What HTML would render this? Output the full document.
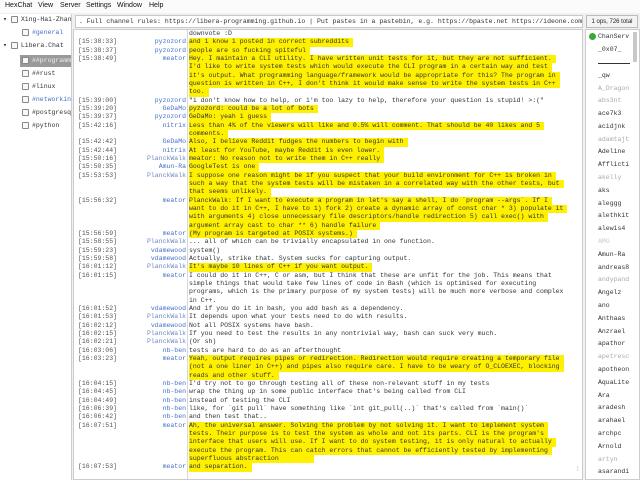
<!DOCTYPE html>
<html><head><meta charset="utf-8"><style>
*{margin:0;padding:0;box-sizing:border-box}
body{width:640px;height:480px;overflow:hidden;background:#f0f0f0;font-family:"Liberation Sans",sans-serif;position:relative}
.menu{position:absolute;left:0;top:0;width:640px;height:13px;background:#fbfbfb;font-size:7px;color:#111}
.menu span{position:absolute;top:2px}
.tree{position:absolute;left:0;top:14px;width:72px;height:466px;background:#fff;border-right:1px solid #ccc;font-family:"Liberation Mono",monospace;font-size:6.5px;color:#333;overflow:hidden}
.ti{position:absolute;white-space:nowrap;height:12px;line-height:12px}
.ic{display:inline-block;width:7px;height:7px;border:1px solid #888;border-radius:1px;vertical-align:middle;margin-right:3px;background:#f8f8f8}
.topic{position:absolute;left:75px;top:15px;width:508px;height:13px;background:#fff;border:1px solid #c8c8c8;font-family:"Liberation Mono",monospace;font-size:6.5px;line-height:12px;color:#333;white-space:nowrap;overflow:hidden;padding-left:3px}
.ops{position:absolute;left:586px;top:15px;width:52px;height:13px;border:1px solid #bbb;font-size:6px;line-height:12px;text-align:center;background:#f4f4f4;color:#222}
.chat{position:absolute;left:73px;top:29px;width:510px;height:451px;background:#fff;border:1px solid #ccc;overflow:hidden;font-family:"Liberation Mono",monospace;font-size:6.5px;color:#333}
.sep{position:absolute;left:113px;top:0;width:1px;height:451px;background:#d8d8d8}
.l{position:absolute;left:0;height:8.33px;line-height:8.33px;white-space:nowrap;width:500px}
.t{position:absolute;left:4px;color:#555}
.n{position:absolute;right:388px;color:#4470c8}
.n.p{color:#7088c0}
.m{position:absolute;left:115px}
.y{background:#fff000;padding-right:4px}
.users{position:absolute;left:585px;top:29px;width:55px;height:451px;background:#fff;border:1px solid #ccc;font-family:"Liberation Mono",monospace;font-size:6.5px;color:#333;overflow:hidden}
.u{position:absolute;left:12px;white-space:nowrap}
.g{color:#aaa}
</style></head><body>
<div class="menu"><span style="left:5px">HexChat</span><span style="left:38px">View</span><span style="left:60px">Server</span><span style="left:86px">Settings</span><span style="left:117px">Window</span><span style="left:149px">Help</span></div>
<div class="tree">
<div class="ti" style="left:3px;top:0">▾ <span class="ic"></span>Xing-Hai-Zhan</div>
<div class="ti" style="left:22px;top:13px"><span class="ic"></span><span style="color:#4470c8">#general</span></div>
<div class="ti" style="left:3px;top:26px">▾ <span class="ic"></span>Libera.Chat</div>
<div class="ti" style="left:20px;top:41px;width:52px;background:#9a9a9a;color:#eee;padding-left:2px"><span class="ic"></span>##programming</div>
<div class="ti" style="left:22px;top:54px"><span class="ic"></span>##rust</div>
<div class="ti" style="left:22px;top:67px"><span class="ic"></span>#linux</div>
<div class="ti" style="left:22px;top:80px"><span class="ic"></span><span style="color:#4470c8">#networking</span></div>
<div class="ti" style="left:22px;top:93px"><span class="ic"></span>#postgresql</div>
<div class="ti" style="left:22px;top:106px"><span class="ic"></span>#python</div>
</div>
<div class="topic">. Full channel rules: https://libera-programming.github.io | Put pastes in a pastebin, e.g. https://bpaste.net https://ideone.com</div>
<div class="ops">1 ops, 726 total</div>
<div class="chat"><div class="sep"></div>
<div class="l" style="top:0px"><span class="m">downvote :D</span></div>
<div class="l" style="top:8.33px"><span class="t">[15:38:33]</span><span class="n">pyzozord</span><span class="m y">and i know i posted in correct subreddits </span></div>
<div class="l" style="top:16.66px"><span class="t">[15:38:37]</span><span class="n">pyzozord</span><span class="m y">people are so fucking spiteful</span></div>
<div class="l" style="top:25px"><span class="t">[15:38:49]</span><span class="n">meator</span><span class="m y">Hey. I maintain a CLI utility. I have written unit tests for it, but they are not sufficient.</span></div>
<div class="l" style="top:33.3px"><span class="m y">I'd like to write system tests which would execute the CLI program in a certain way and test</span></div>
<div class="l" style="top:41.6px"><span class="m y">it's output. What programming language/framework would be appropriate for this? The program in</span></div>
<div class="l" style="top:50px"><span class="m y">question is written in C++, I don't think it would make sense to write the system tests in C++</span></div>
<div class="l" style="top:58.3px"><span class="m y">too.</span></div>
<div class="l" style="top:66.6px"><span class="t">[15:39:00]</span><span class="n">pyzozord</span><span class="m">"i don't know how to help, or i'm too lazy to help, therefore your question is stupid! &gt;:("</span></div>
<div class="l" style="top:75px"><span class="t">[15:39:20]</span><span class="n">GeDaMo</span><span class="m y">pyzozord: could be a lot of bots</span></div>
<div class="l" style="top:83.3px"><span class="t">[15:39:37]</span><span class="n">pyzozord</span><span class="m y">GeDaMo: yeah i guess</span></div>
<div class="l" style="top:91.6px"><span class="t">[15:42:16]</span><span class="n">nitrix</span><span class="m y">Less than 4% of the viewers will like and 0.5% will comment. That should be 40 likes and 5</span></div>
<div class="l" style="top:100px"><span class="m y">comments.</span></div>
<div class="l" style="top:108.3px"><span class="t">[15:42:42]</span><span class="n">GeDaMo</span><span class="m y">Also, I believe Reddit fudges the numbers to begin with</span></div>
<div class="l" style="top:116.6px"><span class="t">[15:42:44]</span><span class="n">nitrix</span><span class="m y">At least for YouTube, maybe Reddit is even lower.</span></div>
<div class="l" style="top:125px"><span class="t">[15:50:16]</span><span class="n p">PlanckWalk</span><span class="m y">meator: No reason not to write them in C++ really</span></div>
<div class="l" style="top:133.3px"><span class="t">[15:50:35]</span><span class="n">Amun-Ra</span><span class="m y">GoogleTest is one</span></div>
<div class="l" style="top:141.6px"><span class="t">[15:53:53]</span><span class="n p">PlanckWalk</span><span class="m y">I suppose one reason might be if you suspect that your build environment for C++ is broken in</span></div>
<div class="l" style="top:150px"><span class="m y">such a way that the system tests will be mistaken in a correlated way with the other tests, but</span></div>
<div class="l" style="top:158.3px"><span class="m y">that seems unlikely.</span></div>
<div class="l" style="top:166.6px"><span class="t">[15:56:32]</span><span class="n">meator</span><span class="m y">PlanckWalk: If I want to execute a program in let's say a shell, I do `program --args`. If I</span></div>
<div class="l" style="top:175px"><span class="m y">want to do it in C++, I have to 1) fork 2) create a dynamic array of const char * 3) populate it</span></div>
<div class="l" style="top:183.3px"><span class="m y">with arguments 4) close unnecessary file descriptors/handle redirection 5) call exec() with</span></div>
<div class="l" style="top:191.6px"><span class="m y">argument array cast to char ** 6) handle failure </span></div>
<div class="l" style="top:200px"><span class="t">[15:56:59]</span><span class="n">meator</span><span class="m y">(My program is targeted at POSIX systems.)</span></div>
<div class="l" style="top:208.3px"><span class="t">[15:58:55]</span><span class="n p">PlanckWalk</span><span class="m">... all of which can be trivially encapsulated in one function.</span></div>
<div class="l" style="top:216.6px"><span class="t">[15:59:23]</span><span class="n">vdamewood</span><span class="m">system()</span></div>
<div class="l" style="top:225px"><span class="t">[15:59:58]</span><span class="n">vdamewood</span><span class="m">Actually, strike that. System sucks for capturing output.</span></div>
<div class="l" style="top:233.3px"><span class="t">[16:01:12]</span><span class="n p">PlanckWalk</span><span class="m y">It's maybe 10 lines of C++ if you want output.</span></div>
<div class="l" style="top:241.6px"><span class="t">[16:01:15]</span><span class="n">meator</span><span class="m">I could do it in C++, C or asm, but I think that these are unfit for the job. This means that</span></div>
<div class="l" style="top:250px"><span class="m">simple things that would take few lines of code in Bash (which is optimised for executing</span></div>
<div class="l" style="top:258.3px"><span class="m">programs, which is the primary purpose of my system tests) will be much more verbose and complex</span></div>
<div class="l" style="top:266.6px"><span class="m">in C++.</span></div>
<div class="l" style="top:275px"><span class="t">[16:01:52]</span><span class="n">vdamewood</span><span class="m">And if you do it in bash, you add bash as a dependency.</span></div>
<div class="l" style="top:283.3px"><span class="t">[16:01:53]</span><span class="n p">PlanckWalk</span><span class="m">It depends upon what your tests need to do with results.</span></div>
<div class="l" style="top:291.6px"><span class="t">[16:02:12]</span><span class="n">vdamewood</span><span class="m">Not all POSIX systems have bash.</span></div>
<div class="l" style="top:300px"><span class="t">[16:02:15]</span><span class="n p">PlanckWalk</span><span class="m">If you need to test the results in any nontrivial way, bash can suck very much.</span></div>
<div class="l" style="top:308.3px"><span class="t">[16:02:21]</span><span class="n p">PlanckWalk</span><span class="m">(Or sh)</span></div>
<div class="l" style="top:316.6px"><span class="t">[16:03:06]</span><span class="n">nb-ben</span><span class="m">tests are hard to do as an afterthought</span></div>
<div class="l" style="top:325px"><span class="t">[16:03:23]</span><span class="n">meator</span><span class="m y">Yeah, output requires pipes or redirection. Redirection would require creating a temporary file</span></div>
<div class="l" style="top:333.3px"><span class="m y">(not a one liner in C++) and pipes also require care. I have to be weary of O_CLOEXEC, blocking</span></div>
<div class="l" style="top:341.6px"><span class="m y">reads and other stuff.</span></div>
<div class="l" style="top:350px"><span class="t">[16:04:15]</span><span class="n">nb-ben</span><span class="m">I'd try not to go through testing all of these non-relevant stuff in my tests</span></div>
<div class="l" style="top:358.3px"><span class="t">[16:04:45]</span><span class="n">nb-ben</span><span class="m">wrap the thing up in some public interface that's being called from CLI</span></div>
<div class="l" style="top:366.6px"><span class="t">[16:04:49]</span><span class="n">nb-ben</span><span class="m">instead of testing the CLI</span></div>
<div class="l" style="top:375px"><span class="t">[16:06:39]</span><span class="n">nb-ben</span><span class="m">like, for `git pull` have something like `int git_pull(..)` that's called from `main()`</span></div>
<div class="l" style="top:383.3px"><span class="t">[16:06:42]</span><span class="n">nb-ben</span><span class="m">and then test that..</span></div>
<div class="l" style="top:391.6px"><span class="t">[16:07:51]</span><span class="n">meator</span><span class="m y">Ah, the universal answer. Solving the problem by not solving it. I want to implement system</span></div>
<div class="l" style="top:400px"><span class="m y">tests. Their purpose is to test the system as whole and not its parts. CLI is the program's</span></div>
<div class="l" style="top:408.3px"><span class="m y">interface that users will use. If I want to do system testing, it is only natural to actually</span></div>
<div class="l" style="top:416.6px"><span class="m y">execute the program. This can catch errors that cannot be efficiently tested by implementing</span></div>
<div class="l" style="top:425px"><span class="m y">superfluous abstraction &nbsp;&nbsp;&nbsp;&nbsp;&nbsp;&nbsp;&nbsp;</span></div>
<div class="l" style="top:433.3px"><span class="t">[16:07:53]</span><span class="n">meator</span><span class="m y">and separation.</span></div>
<div style="position:absolute;left:502px;top:436px;font-size:6px;color:#999">⁞</div>
</div>
<div class="users">
<div style="position:absolute;left:3px;top:3px;width:7px;height:7px;border-radius:50%;background:#3aa83a"></div>
<div style="position:absolute;left:47px;top:2px;width:4px;height:30px;background:#c8c8c8"></div>
<div class="u" style="top:3px">ChanServ</div>
<div class="u" style="top:16px">_0x07_</div>
<div class="u" style="top:29px;width:32px;border-bottom:1px solid #333;height:5px"></div>
<div class="u" style="top:42px">_qw</div>
<div class="u g" style="top:55px">A_Dragon</div>
<div class="u g" style="top:67px">abs3nt</div>
<div class="u" style="top:80px">ace7k3</div>
<div class="u" style="top:93px">acidjnk</div>
<div class="u g" style="top:106px">adamtajt</div>
<div class="u" style="top:118px">Adeline</div>
<div class="u" style="top:131px">Afflicti</div>
<div class="u g" style="top:144px">akelly</div>
<div class="u" style="top:157px">aks</div>
<div class="u" style="top:170px">aleggg</div>
<div class="u" style="top:182px">alethkit</div>
<div class="u" style="top:195px">alewis4</div>
<div class="u g" style="top:208px;color:#ccc">AMG</div>
<div class="u" style="top:221px">Amun-Ra</div>
<div class="u" style="top:234px">andreas8</div>
<div class="u g" style="top:246px">andypand</div>
<div class="u" style="top:259px">Angelz</div>
<div class="u" style="top:272px">ano</div>
<div class="u" style="top:285px">Anthaas</div>
<div class="u" style="top:298px">Anzrael</div>
<div class="u" style="top:310px">apathor</div>
<div class="u g" style="top:323px">apetresc</div>
<div class="u" style="top:336px">apotheon</div>
<div class="u" style="top:349px">AquaLite</div>
<div class="u" style="top:362px">Ara</div>
<div class="u" style="top:374px">aradesh</div>
<div class="u" style="top:387px">arahael</div>
<div class="u" style="top:400px">archpc</div>
<div class="u" style="top:413px">Arnold</div>
<div class="u g" style="top:426px">artyn</div>
<div class="u" style="top:438px">asarandi</div>
</div>
</body></html>
